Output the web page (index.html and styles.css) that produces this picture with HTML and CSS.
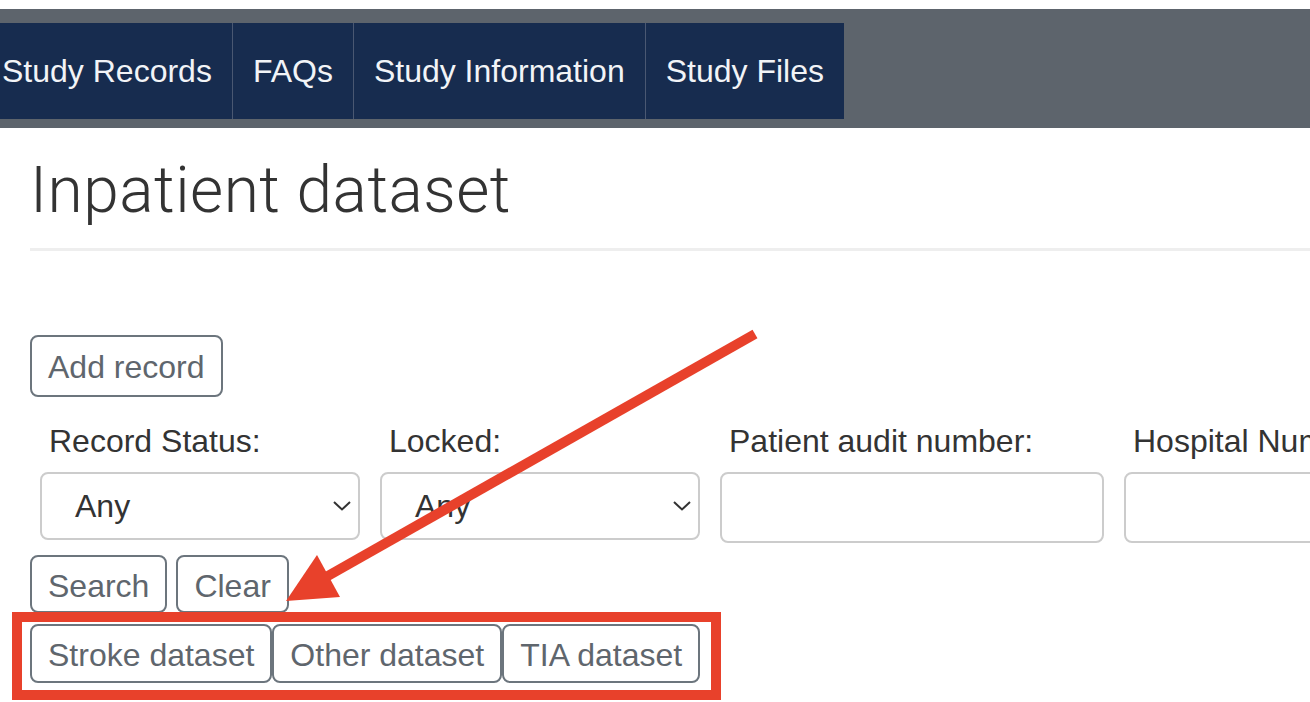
FILE: index.html
```html
<!DOCTYPE html>
<html lang="en">
<head>
<meta charset="utf-8">
<title>Inpatient dataset</title>
<link rel="stylesheet" href="styles.css">
</head>
<body>
<header class="topbar">
  <nav class="mainnav">
    <a class="navitem" href="#">Study Records</a>
    <a class="navitem" href="#">FAQs</a>
    <a class="navitem" href="#">Study Information</a>
    <a class="navitem" href="#">Study Files</a>
  </nav>
</header>
<main class="content">
  <h1 class="title">Inpatient dataset</h1>
  <button class="btn btn-add" type="button">Add record</button>
  <form class="filters">
    <div class="field field-select">
      <label class="label">Record Status:</label>
      <div class="select"><span>Any</span><svg class="chev" width="18" height="10" viewBox="0 0 18 10"><path d="M1 1 L9 8.5 L17 1" fill="none" stroke="#333" stroke-width="2"/></svg></div>
    </div>
    <div class="field field-select">
      <label class="label">Locked:</label>
      <div class="select"><span>Any</span><svg class="chev" width="18" height="10" viewBox="0 0 18 10"><path d="M1 1 L9 8.5 L17 1" fill="none" stroke="#333" stroke-width="2"/></svg></div>
    </div>
    <div class="field field-text">
      <label class="label">Patient audit number:</label>
      <input class="input" type="text">
    </div>
    <div class="field field-text">
      <label class="label">Hospital Number:</label>
      <input class="input" type="text">
    </div>
  </form>
  <div class="actions">
    <button class="btn btn-small" type="button">Search</button>
    <button class="btn btn-small" type="button">Clear</button>
  </div>
  <div class="highlight">
    <button class="btn btn-ds" type="button">Stroke dataset</button>
    <button class="btn btn-ds" type="button">Other dataset</button>
    <button class="btn btn-ds" type="button">TIA dataset</button>
  </div>
</main>
<svg class="arrow" width="1310" height="702" viewBox="0 0 1310 702">
  <line x1="755" y1="334" x2="326" y2="577" stroke="#e8412b" stroke-width="10"/>
  <polygon points="286,601 317,555 340,597" fill="#e8412b"/>
</svg>
</body>
</html>
```
FILE: styles.css
```css
html, body {
  margin: 0;
  padding: 0;
}
body {
  width: 1310px;
  height: 702px;
  overflow: hidden;
  background: #fff;
  font-family: "Liberation Sans", Arial, Helvetica, sans-serif;
  color: #333;
  position: relative;
}
.topbar {
  margin-top: 9px;
  background: #5d646c;
  padding: 14px 0 9px;
}
.mainnav {
  display: flex;
  margin-left: -18px;
  width: max-content;
  background: #172c4f;
  height: 96px;
}
.navitem {
  display: flex;
  align-items: center;
  padding: 0 20px;
  color: #f2f4f7;
  text-decoration: none;
  font-size: 32px;
  border-right: 1px solid #4a5872;
}
.navitem:last-child {
  border-right: none;
}
.content {
  padding-left: 30px;
}
.title {
  margin: 28px 0 0;
  font-family: "Roboto", "Liberation Sans", sans-serif;
  font-weight: 300;
  font-size: 64px;
  line-height: 70px;
  letter-spacing: 0.5px;
  color: #333;
  padding-bottom: 22px;
  border-bottom: 3px solid #eee;
}
.btn {
  font-family: "Liberation Sans", Arial, sans-serif;
  font-size: 32px;
  color: #5f666d;
  background: #fff;
  border: 2px solid #6c757d;
  border-radius: 8px;
  padding: 0 16px;
  margin: 0;
  cursor: pointer;
  display: inline-block;
}
.btn-add {
  margin-top: 84px;
  height: 62px;
  line-height: 58px;
  padding-top: 1px;
}
.filters {
  display: flex;
  gap: 20px;
  padding-left: 10px;
  margin-top: 25px;
}
.field {
  display: flex;
  flex-direction: column;
  flex: none;
}
.field-select { width: 320px; }
.field-text { width: 384px; }
.label {
  font-size: 32px;
  line-height: 38px;
  padding-left: 9px;
  margin-bottom: 12px;
  color: #333;
  white-space: nowrap;
}
.select {
  height: 68px;
  box-sizing: border-box;
  border: 2px solid #ccc;
  border-radius: 8px;
  display: flex;
  align-items: center;
  justify-content: space-between;
  padding: 0 7px 0 33px;
  font-size: 32px;
  color: #333;
}
.chev {
  display: block;
}
.input {
  height: 71px;
  box-sizing: border-box;
  border: 2px solid #ccc;
  border-radius: 8px;
  font-size: 32px;
  padding: 0 20px;
  margin: 0;
  background: #fff;
}
.actions {
  display: flex;
  gap: 9px;
  margin-top: 12px;
}
.btn-small {
  height: 58px;
  line-height: 52px;
  padding-top: 3px;
}
.highlight {
  display: inline-flex;
  gap: 0;
  margin-top: -1px;
  margin-left: -18px;
  border: 10px solid #e8412b;
  padding: 2px 11px 7px 8px;
}
.btn-ds {
  height: 59px;
  line-height: 53px;
  padding-top: 3px;
}
.arrow {
  position: absolute;
  left: 0;
  top: 0;
  pointer-events: none;
}
```
